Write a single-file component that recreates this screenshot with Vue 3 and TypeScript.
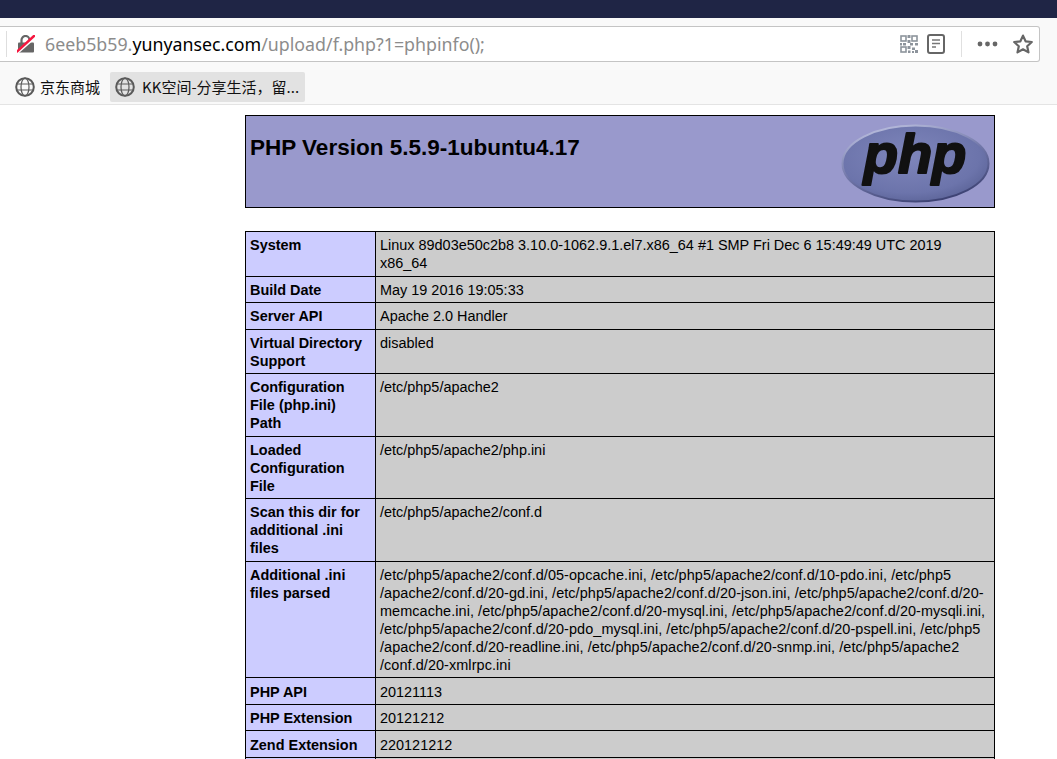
<script setup lang="ts">
const rows: [string, string][] = [
  ['System', 'Linux 89d03e50c2b8 3.10.0-1062.9.1.el7.x86_64 #1 SMP Fri Dec 6 15:49:49 UTC 2019\nx86_64'],
  ['Build Date', 'May 19 2016 19:05:33'],
  ['Server API', 'Apache 2.0 Handler'],
  ['Virtual Directory\nSupport', 'disabled'],
  ['Configuration\nFile (php.ini)\nPath', '/etc/php5/apache2'],
  ['Loaded\nConfiguration\nFile', '/etc/php5/apache2/php.ini'],
  ['Scan this dir for\nadditional .ini\nfiles', '/etc/php5/apache2/conf.d'],
  ['Additional .ini\nfiles parsed', '/etc/php5/apache2/conf.d/05-opcache.ini, /etc/php5/apache2/conf.d/10-pdo.ini, /etc/php5\n/apache2/conf.d/20-gd.ini, /etc/php5/apache2/conf.d/20-json.ini, /etc/php5/apache2/conf.d/20-\nmemcache.ini, /etc/php5/apache2/conf.d/20-mysql.ini, /etc/php5/apache2/conf.d/20-mysqli.ini,\n/etc/php5/apache2/conf.d/20-pdo_mysql.ini, /etc/php5/apache2/conf.d/20-pspell.ini, /etc/php5\n/apache2/conf.d/20-readline.ini, /etc/php5/apache2/conf.d/20-snmp.ini, /etc/php5/apache2\n/conf.d/20-xmlrpc.ini'],
  ['PHP API', '20121113'],
  ['PHP Extension', '20121212'],
  ['Zend Extension', '220121212'],
  ['', ''],
]
</script>

<template>
  <div class="page">
    <div class="topbar"></div>
    <div class="toolbar">
      <div class="urlbar">
        <span class="edge"></span>
        <svg class="lock" width="18" height="18" viewBox="0 0 18 18">
          <path d="M4.5 8V5a4 4 0 0 1 8 0V8" fill="none" stroke="#666" stroke-width="2.2" />
          <rect x="1" y="7.5" width="16" height="10" rx="1" fill="#666" />
          <path d="M-1 18.5 18 2" stroke="#fff" stroke-width="3.2" />
          <path d="M0 16.5 17 1" stroke="#f5173f" stroke-width="2.4" stroke-linecap="round" />
        </svg>
        <div class="url"><span class="dim">6eeb5b59.</span>yunyansec.com<span class="dim">/upload/f.php?1=phpinfo();</span></div>
        <svg class="qr" width="18" height="18" viewBox="0 0 18 18">
          <g fill="none" stroke="#8d949c" stroke-width="1.6">
            <rect x="1" y="1" width="5" height="5" />
            <rect x="12" y="1" width="5" height="5" />
            <rect x="1" y="12" width="5" height="5" />
          </g>
          <g fill="#8d949c">
            <rect x="7.5" y="0" width="3" height="3" /><rect x="7.5" y="5" width="3" height="3" />
            <rect x="3" y="8" width="3" height="2.5" /><rect x="10" y="8" width="3" height="2.5" />
            <rect x="15" y="8" width="3" height="2.5" /><rect x="0" y="8" width="2" height="2.5" />
            <rect x="7.5" y="11" width="3" height="3" /><rect x="12" y="12.5" width="3" height="2.5" />
            <rect x="15" y="15" width="3" height="3" /><rect x="8" y="15.5" width="2.5" height="2.5" /><rect x="12" y="16" width="2" height="2" />
          </g>
        </svg>
        <svg class="reader" width="18" height="20" viewBox="0 0 18 20">
          <rect x="1" y="1" width="16" height="18" rx="2" fill="none" stroke="#666" stroke-width="2" />
          <path d="M5 6h8M5 9.5h8M5 13h4" stroke="#777" stroke-width="1.4" />
        </svg>
        <span class="sep"></span>
        <svg class="dots" width="21" height="6" viewBox="0 0 21 6">
          <circle cx="3" cy="3" r="2.4" fill="#666" /><circle cx="10.5" cy="3" r="2.4" fill="#666" /><circle cx="18" cy="3" r="2.4" fill="#666" />
        </svg>
        <svg class="star" width="20" height="20" viewBox="0 0 20 20">
          <path d="M10 1.6 12.6 7.3 18.8 8 14.2 12.2 15.5 18.4 10 15.3 4.5 18.4 5.8 12.2 1.2 8 7.4 7.3Z" fill="none" stroke="#666" stroke-width="2.2" stroke-linejoin="round" />
        </svg>
      </div>
    </div>
    <div class="bookmarks">
      <div class="bm">
        <svg class="globe" width="20" height="20" viewBox="0 0 20 20">
          <g fill="none" stroke="#5a5a5a">
            <circle cx="10" cy="10" r="8.8" stroke-width="2" />
            <ellipse cx="10" cy="10" rx="4" ry="8.8" stroke-width="1.2" />
            <path d="M1.5 7h17M1.5 13h17" stroke-width="1.2" />
          </g>
        </svg>
        <span class="bmtext">京东商城</span>
      </div>
      <div class="bm active">
        <svg class="globe" width="20" height="20" viewBox="0 0 20 20">
          <g fill="none" stroke="#5a5a5a">
            <circle cx="10" cy="10" r="8.8" stroke-width="2" />
            <ellipse cx="10" cy="10" rx="4" ry="8.8" stroke-width="1.2" />
            <path d="M1.5 7h17M1.5 13h17" stroke-width="1.2" />
          </g>
        </svg>
        <span class="bmtext">KK空间-分享生活，留...</span>
      </div>
    </div>
    <main class="content">
      <div class="hero">
        <h1>PHP Version 5.5.9-1ubuntu4.17</h1>
        <svg class="logo" width="149" height="84" viewBox="0 -5 149 84">
          <defs>
            <radialGradient id="eg" cx="0.45" cy="0.4" r="0.65">
              <stop offset="0" stop-color="#7f86bb" />
              <stop offset="0.75" stop-color="#6c74ab" />
              <stop offset="1" stop-color="#5a6296" />
            </radialGradient>
            <linearGradient id="rim" x1="0.25" y1="0" x2="0.7" y2="1">
              <stop offset="0" stop-color="#b9bddd" />
              <stop offset="0.5" stop-color="#7076a8" />
              <stop offset="1" stop-color="#3a3f70" />
            </linearGradient>
          </defs>
          <ellipse cx="74.5" cy="39.5" rx="73" ry="38" fill="url(#eg)" stroke="url(#rim)" stroke-width="2" />
          <text x="74" y="49" text-anchor="middle" class="logotext">php</text>
        </svg>
      </div>
      <table class="info">
        <tbody>
          <tr v-for="(r, i) in rows" :key="i">
            <td class="k">{{ r[0] }}</td>
            <td class="v" :class="{ parsed: i === 7 }">{{ r[1] }}</td>
          </tr>
        </tbody>
      </table>
    </main>
  </div>
</template>

<style scoped>
.page { height: 759px; overflow: hidden; background: #fff; font-family: "Liberation Sans", Arial, sans-serif; }
.topbar { height: 18px; background: #1f2545; }
.toolbar { background: #f9f9f9; padding: 8px 17px 0 0; height: 36px; }
.urlbar { height: 36px; box-sizing: border-box; background: #fff; border: 1px solid #c4c4c4; border-left: 0; border-radius: 0 3px 3px 0; display: flex; align-items: center; padding-left: 6px; }
.edge { flex: none; width: 1px; height: 26px; background: #dedede; margin-right: 10px; }
.lock { flex: none; }
.url { flex: 1; margin-left: 10px; font: 17.8px "Noto Sans", sans-serif; color: #000; white-space: nowrap; }
.dim { color: #8c8c8c; }
.qr { flex: none; margin-right: 9px; }
.reader { flex: none; margin-right: 16px; }
.sep { width: 1px; height: 26px; background: #e0e0e0; margin-right: 15px; }
.dots { flex: none; margin-right: 15px; }
.star { flex: none; margin-right: 6px; }
.bookmarks { height: 32px; background: #f9f9f9; border-bottom: 1px solid #e4e4e4; display: flex; align-items: flex-start; padding: 10px 0 0 10px; gap: 5px; }
.bm { height: 30px; padding: 0 5px; border-radius: 2px; display: flex; align-items: center; gap: 5px; font: 15px "Noto Sans CJK SC", sans-serif; color: #111; }
.bm.active { background: #e2e2e2; gap: 7px; padding-right: 6px; }
.bmtext { margin-bottom: 2px; }
.globe { flex: none; }
.content { padding: 10px 0 0 245px; }
.hero { width: 750px; height: 93px; box-sizing: border-box; border: 1px solid #000; background: #9999cc; display: flex; justify-content: space-between; align-items: flex-start; padding: 3px 4px 0 4px; }
h1 { margin: 15px 0 0; font-size: 22.5px; line-height: 28px; font-weight: bold; color: #000; }
.logo { flex: none; }
.logotext { font: italic bold 56px "Liberation Sans", sans-serif; fill: #111; stroke: #111; stroke-width: 2.2; stroke-linejoin: round; }
.info { margin-top: 23px; width: 750px; table-layout: fixed; border-collapse: collapse; font-size: 14.45px; line-height: 18px; color: #000; }
.info td { border: 1px solid #000; padding: 4.27px 4px 3.27px; vertical-align: top; white-space: pre-line; }
.k { width: 121px; background: #ccccff; font-weight: bold; }
.v { background: #cccccc; }
.parsed { letter-spacing: 0.07px; }
</style>
